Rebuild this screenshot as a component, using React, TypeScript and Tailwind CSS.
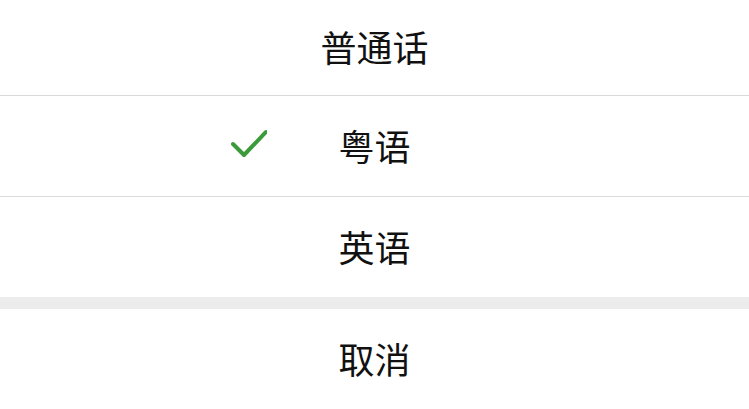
import React from 'react';

const options = [
  { label: '普通话', checked: false, h: 'h-[96px]' },
  { label: '粤语', checked: true, h: 'h-[101px]' },
  { label: '英语', checked: false, h: 'h-[100px]' },
];

const CheckIcon: React.FC = () => (
  <svg width="36" height="30" viewBox="0 0 36 30" className="absolute left-[231px] top-1/2 -translate-y-1/2 -mt-[2px]">
    <path d="M2 15 L13 26 L35 3" fill="none" stroke="#3b9b3b" strokeWidth="4" strokeLinecap="round" strokeLinejoin="round" />
  </svg>
);

export default function App() {
  return (
    <div className="w-[749px] h-[409px] bg-white overflow-hidden flex flex-col text-[36px] text-[#111] font-['Noto_Sans_CJK_SC',sans-serif]">
      {options.map((opt, i) => (
        <div
          key={opt.label}
          className={`relative flex items-center justify-center leading-none shrink-0 ${opt.h} ${i < options.length - 1 ? 'border-b border-[#d9d9d9]' : ''}`}
        >
          {opt.checked && <CheckIcon />}
          <span className="-mt-[3px]">{opt.label}</span>
        </div>
      ))}
      <div className="h-[12px] shrink-0 bg-[#ececec]" />
      <div className="h-[100px] shrink-0 flex items-center justify-center leading-none">
        <span className="-mt-[3px]">取消</span>
      </div>
    </div>
  );
}
